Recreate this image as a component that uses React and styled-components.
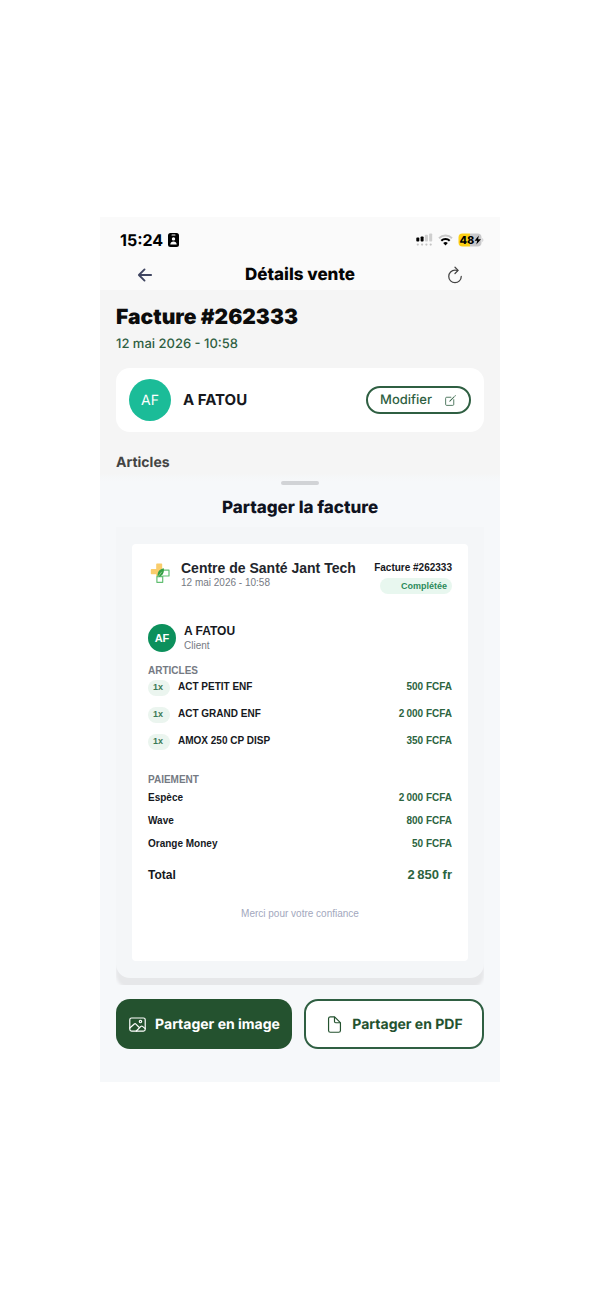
import React from 'react';
import styled, { createGlobalStyle, css } from 'styled-components';
import {
  IoArrowBack,
  IoCreateOutline,
  IoDocumentOutline,
  IoImageOutline,
  IoRefreshOutline,
} from 'react-icons/io5';

const colors = {
  brand: '#24522f',
  brandSoft: '#2f5f42',
  amount: '#2c6440',
  ink: '#16181d',
  muted: '#767a83',
  footer: '#a2a7bd',
  badge: '#e8f7ef',
  badgeText: '#2c8a5b',
};

const GlobalStyle = createGlobalStyle`
  * {
    box-sizing: border-box;
  }

  body {
    margin: 0;
    background: #ffffff;
    font-family: Inter, 'Liberation Sans', sans-serif;
    text-rendering: geometricPrecision;
    color: ${colors.ink};
  }

  h1, h2, h3, p {
    margin: 0;
  }

  button {
    font-family: inherit;
    text-rendering: inherit;
    cursor: pointer;
  }
`;

const Page = styled.div`
  padding: 217px 100px;
`;

const Screen = styled.div`
  background: #f5f5f5;
`;

const TopArea = styled.header`
  padding: 13px 16px 3px;
  background: #fafafa;
`;

const StatusBar = styled.div`
  display: flex;
  align-items: center;
  justify-content: space-between;
  height: 20px;
  padding-left: 4px;
`;

const StatusGroup = styled.div`
  display: flex;
  align-items: center;
  gap: ${(props) => props.$gap}px;
`;

const Clock = styled.span`
  font-size: 16px;
  font-weight: 700;
  line-height: 20px;
  color: #000000;
`;

const NavBar = styled.nav`
  display: grid;
  grid-template-columns: 24px 1fr 24px;
  align-items: center;
  margin-top: 13px;
  padding: 0 17px;
`;

const NavTitle = styled.h1`
  font-size: 17px;
  font-weight: 800;
  line-height: 24px;
  text-align: center;
  color: #050505;
`;

const IconButton = styled.button`
  display: flex;
  align-items: center;
  justify-content: center;
  width: 24px;
  height: 24px;
  padding: 0;
  border: 0;
  background: none;
  color: ${(props) => props.$color};
`;

const Content = styled.main`
  padding: 16px 16px 0;
`;

const SaleTitle = styled.h2`
  font-size: 21px;
  font-weight: 900;
  line-height: 24px;
  color: #0c0c0c;
`;

const SaleDate = styled.p`
  margin-top: 6px;
  font-size: 13px;
  font-weight: 500;
  line-height: 16px;
  color: ${colors.brandSoft};
`;

const ClientCard = styled.section`
  display: flex;
  align-items: center;
  gap: 12px;
  margin-top: 16px;
  padding: 11px 13px;
  border-radius: 14px;
  background: #ffffff;
`;

const Avatar = styled.div`
  display: flex;
  flex-shrink: 0;
  align-items: center;
  justify-content: center;
  border-radius: 50%;
  color: #ffffff;

  ${(props) =>
    props.$small
      ? css`
          width: 28px;
          height: 28px;
          background: #0c905c;
          font-size: 11px;
          font-weight: 700;
        `
      : css`
          width: 42px;
          height: 42px;
          background: #1bbc98;
          font-size: 14px;
          font-weight: 400;
        `}
`;

const ClientName = styled.p`
  flex: 1;
  font-size: 15px;
  font-weight: 700;
  line-height: 20px;
`;

const EditButton = styled.button`
  display: flex;
  align-items: center;
  gap: 12px;
  height: 28px;
  padding: 0 12px;
  border: 2px solid ${colors.brandSoft};
  border-radius: 14px;
  background: #ffffff;
  font-size: 13px;
  font-weight: 500;
  color: ${colors.brandSoft};
`;

const SectionTitle = styled.h3`
  margin-top: 21px;
  font-size: 14px;
  font-weight: 700;
  line-height: 20px;
  color: #444444;
`;

const Sheet = styled.section`
  padding: 8px 16px 33px;
  background: linear-gradient(#f5f5f5, #f6f8fa 8px);
`;

const Handle = styled.div`
  width: 38px;
  height: 4px;
  margin: 0 auto;
  border-radius: 2px;
  background: #d1d3d6;
`;

const SheetTitle = styled.h2`
  margin-top: 11px;
  font-size: 17px;
  font-weight: 800;
  line-height: 24px;
  text-align: center;
  color: #10131f;
`;

const Preview = styled.div`
  margin-top: 7px;
  padding-bottom: 7px;
  overflow: hidden;
`;

const PreviewPanel = styled.div`
  padding: 17px 16px;
  border-radius: 0 0 14px 14px;
  background: #f4f6f8;
  box-shadow: 0 10px 3px #e6e7e9;
`;

const Receipt = styled.article`
  padding: 16px 16px 41px;
  border-radius: 4px;
  background: #ffffff;
  font-family: 'Liberation Sans', Arial, sans-serif;
  text-rendering: auto;
`;

const ReceiptHeader = styled.div`
  display: flex;
  align-items: flex-start;
  gap: 9px;
`;

const Logo = styled.svg`
  flex-shrink: 0;
  width: 24px;
  height: 26px;
`;

const Shop = styled.div`
  flex: 1;
`;

const ShopName = styled.h3`
  font-size: 14px;
  font-weight: 700;
  line-height: 16px;
  white-space: nowrap;
  color: #22252c;
`;

const SmallText = styled.p`
  font-size: 10px;
  line-height: 13px;
  text-align: ${(props) => (props.$center ? 'center' : 'left')};
  color: ${(props) => props.$color || colors.muted};
`;

const InvoiceInfo = styled.div`
  display: flex;
  flex-direction: column;
  align-items: flex-end;
  gap: 2px;
`;

const InvoiceNumber = styled.p`
  font-size: 10px;
  font-weight: 700;
  line-height: 16px;
  white-space: nowrap;
`;

const StatusBadge = styled.span`
  width: 72px;
  padding-right: 5px;
  border-radius: 8px;
  background: ${colors.badge};
  font-size: 9px;
  font-weight: 700;
  line-height: 16px;
  text-align: right;
  color: ${colors.badgeText};
`;

const Customer = styled.div`
  display: flex;
  align-items: center;
  gap: 8px;
  margin-top: 30px;
`;

const CustomerName = styled.p`
  font-size: 12px;
  font-weight: 700;
  line-height: 15px;
`;

const GroupTitle = styled.h4`
  margin: 13px 0 0;
  font-size: 10px;
  font-weight: 700;
  line-height: 12px;
  color: #757a83;
`;

const Lines = styled.table`
  width: 100%;
  margin-top: ${(props) => props.$top}px;
  border-collapse: collapse;
  font-size: 10px;
  line-height: 14px;

  tr {
    height: ${(props) => props.$rowHeight}px;
  }

  th,
  td {
    padding: 0;
    font-weight: 700;
    text-align: left;
    vertical-align: top;
  }

  td:last-child {
    text-align: right;
    color: ${colors.amount};
  }
`;

const QuantityCell = styled.td`
  width: 30px;
`;

const Quantity = styled.span`
  display: block;
  width: 22px;
  height: 16px;
  padding-left: 5px;
  border-radius: 8px;
  background: #ebf5ef;
  font-size: 9px;
  line-height: 15px;
  color: #3b7a56;
`;

const Total = styled.div`
  display: flex;
  justify-content: space-between;
  margin: 7px 0 24px;
  font-size: 12px;
  font-weight: 700;
  line-height: 16px;
`;

const TotalAmount = styled.span`
  font-size: 13px;
  color: ${colors.amount};
`;

const Actions = styled.div`
  display: flex;
  gap: 12px;
  margin-top: 14px;
`;

const ShareButton = styled.button`
  display: flex;
  flex: 1;
  align-items: center;
  justify-content: center;
  gap: 8px;
  height: 50px;
  padding: 0;
  border: ${(props) => (props.$outline ? `2px solid ${colors.brandSoft}` : 0)};
  border-radius: 14px;
  background: ${(props) => (props.$outline ? '#ffffff' : colors.brand)};
  font-size: 14px;
  font-weight: 700;
  white-space: nowrap;
  color: ${(props) => (props.$outline ? colors.brand : '#ffffff')};
`;

const articles = [
  { quantity: 1, name: 'ACT PETIT ENF', amount: '500 FCFA' },
  { quantity: 1, name: 'ACT GRAND ENF', amount: '2\u202f000 FCFA' },
  { quantity: 1, name: 'AMOX 250 CP DISP', amount: '350 FCFA' },
];

const payments = [
  { name: 'Espèce', amount: '2\u202f000 FCFA' },
  { name: 'Wave', amount: '800 FCFA' },
  { name: 'Orange Money', amount: '50 FCFA' },
];

const ContactBadge = () => (
  <svg width="11" height="14" viewBox="0 0 11 14" aria-hidden="true">
    <rect width="11" height="14" rx="2.5" fill="#000" />
    <rect x="3.5" y="1.5" width="4" height="1" rx="0.5" fill="#fafafa" />
    <circle cx="5.5" cy="5.9" r="1.7" fill="#fafafa" />
    <path d="M2.3 11.6c0-2 1.4-3.1 3.2-3.1s3.2 1.1 3.2 3.1z" fill="#fafafa" />
  </svg>
);

const Signal = () => (
  <svg width="17" height="14" viewBox="0 0 17 14" aria-hidden="true">
    <rect x="0.3" y="4.6" width="3" height="4" rx="0.8" fill="#000" />
    <rect x="4.6" y="3.4" width="3" height="5.2" rx="0.8" fill="#000" />
    <rect x="8.9" y="1.8" width="3" height="6.8" rx="0.8" fill="#cfcfcf" />
    <rect x="13.2" y="0.4" width="3" height="8.2" rx="0.8" fill="#cfcfcf" />
    {[1.8, 6.1, 10.4, 14.7].map((x) => (
      <circle key={x} cx={x} cy="11.6" r="1.1" fill="#c4c4c4" />
    ))}
  </svg>
);

const Wifi = () => (
  <svg width="15" height="12" viewBox="0 0 15 12" fill="none" aria-hidden="true">
    <path d="M1 4.2a9.4 9.4 0 0 1 13 0" stroke="#c8c8c8" strokeWidth="2" />
    <path d="M3.3 6.7a6.1 6.1 0 0 1 8.4 0" stroke="#000" strokeWidth="2.1" />
    <path d="M7.5 11.4 5.2 9.1a3.3 3.3 0 0 1 4.6 0z" fill="#000" />
  </svg>
);

const Battery = () => (
  <svg width="26" height="14" viewBox="0 0 26 14" aria-label="48 %">
    <path d="M4.5 0.5H12v13H4.5a4 4 0 0 1-4-4v-5a4 4 0 0 1 4-4z" fill="#fcd015" />
    <path d="M12 0.5h7.5a4 4 0 0 1 4 4v5a4 4 0 0 1-4 4H12z" fill="#c9c9cb" />
    <path d="M24.3 5v4c1.4-.6 1.4-3.4 0-4z" fill="#c9c9cb" />
    <text
      x="1.5"
      y="11"
      fontFamily="Inter, sans-serif"
      fontSize="11"
      fontWeight="800"
    >
      48
    </text>
    <path d="M20.8 2.6 16.6 7.7h2.6l-.9 3.9 4.7-5.3h-2.9z" fill="#000" />
  </svg>
);

const ClinicLogo = () => (
  <Logo viewBox="0 0 24 26" aria-hidden="true">
    <path
      d="M9 3.4h4.4a.8.8 0 0 1 .8.8v5h1.4c-2.8 1.2-5 3.4-5 7.2H8.2v-2.2H3.6a.8.8 0 0 1-.8-.8V9.9a.8.8 0 0 1 .8-.8h4.6V4.2a.8.8 0 0 1 .8-.8z"
      fill="#f9cd6c"
    />
    <path
      d="M15 10.2h6v5.8h-6.3v6.3H8.9v-5.6h5.8"
      fill="none"
      stroke="#63bf73"
      strokeWidth="1.2"
      strokeLinejoin="round"
    />
    <path d="M15.8 8.2c.6 4.7-1 7.9-6.1 9-.6-4.7 1.2-8 6.1-9z" fill="#35a047" />
    <path d="M9.7 17.2 13.8 11.8" stroke="#d9efc9" strokeWidth="0.5" />
  </Logo>
);

const InvoiceReceipt = () => (
  <Receipt>
    <ReceiptHeader>
      <ClinicLogo />
      <Shop>
        <ShopName>Centre de Santé Jant Tech</ShopName>
        <SmallText>12 mai 2026 - 10:58</SmallText>
      </Shop>
      <InvoiceInfo>
        <InvoiceNumber>Facture #262333</InvoiceNumber>
        <StatusBadge>Complétée</StatusBadge>
      </InvoiceInfo>
    </ReceiptHeader>

    <Customer>
      <Avatar $small>AF</Avatar>
      <div>
        <CustomerName>A FATOU</CustomerName>
        <SmallText>Client</SmallText>
      </div>
    </Customer>

    <GroupTitle>ARTICLES</GroupTitle>
    <Lines $top={3} $rowHeight={27}>
      <tbody>
        {articles.map((article) => (
          <tr key={article.name}>
            <QuantityCell>
              <Quantity>{article.quantity}x</Quantity>
            </QuantityCell>
            <th scope="row">{article.name}</th>
            <td>{article.amount}</td>
          </tr>
        ))}
      </tbody>
    </Lines>

    <GroupTitle>PAIEMENT</GroupTitle>
    <Lines $top={5} $rowHeight={23}>
      <tbody>
        {payments.map((payment) => (
          <tr key={payment.name}>
            <th scope="row">{payment.name}</th>
            <td>{payment.amount}</td>
          </tr>
        ))}
      </tbody>
    </Lines>

    <Total>
      <span>Total</span>
      <TotalAmount>{'2\u202f850 fr'}</TotalAmount>
    </Total>
    <SmallText $center $color={colors.footer}>
      Merci pour votre confiance
    </SmallText>
  </Receipt>
);

const App = () => (
  <>
    <GlobalStyle />
    <Page>
      <Screen>
        <TopArea>
          <StatusBar>
            <StatusGroup $gap={5}>
              <Clock>15:24</Clock>
              <ContactBadge />
            </StatusGroup>
            <StatusGroup $gap={5}>
              <Signal />
              <Wifi />
              <Battery />
            </StatusGroup>
          </StatusBar>
          <NavBar>
            <IconButton $color="#3f4560" aria-label="Retour">
              <IoArrowBack size={20} />
            </IconButton>
            <NavTitle>Détails vente</NavTitle>
            <IconButton $color="#444444" aria-label="Actualiser">
              <IoRefreshOutline size={20} />
            </IconButton>
          </NavBar>
        </TopArea>

        <Content>
          <SaleTitle>Facture #262333</SaleTitle>
          <SaleDate>12 mai 2026 - 10:58</SaleDate>
          <ClientCard>
            <Avatar>AF</Avatar>
            <ClientName>A FATOU</ClientName>
            <EditButton>
              Modifier
              <IoCreateOutline size={13} />
            </EditButton>
          </ClientCard>
          <SectionTitle>Articles</SectionTitle>
        </Content>

        <Sheet>
          <Handle />
          <SheetTitle>Partager la facture</SheetTitle>
          <Preview>
            <PreviewPanel>
              <InvoiceReceipt />
            </PreviewPanel>
          </Preview>
          <Actions>
            <ShareButton>
              <IoImageOutline size={19} />
              Partager en image
            </ShareButton>
            <ShareButton $outline>
              <IoDocumentOutline size={19} />
              Partager en PDF
            </ShareButton>
          </Actions>
        </Sheet>
      </Screen>
    </Page>
  </>
);

export default App;
